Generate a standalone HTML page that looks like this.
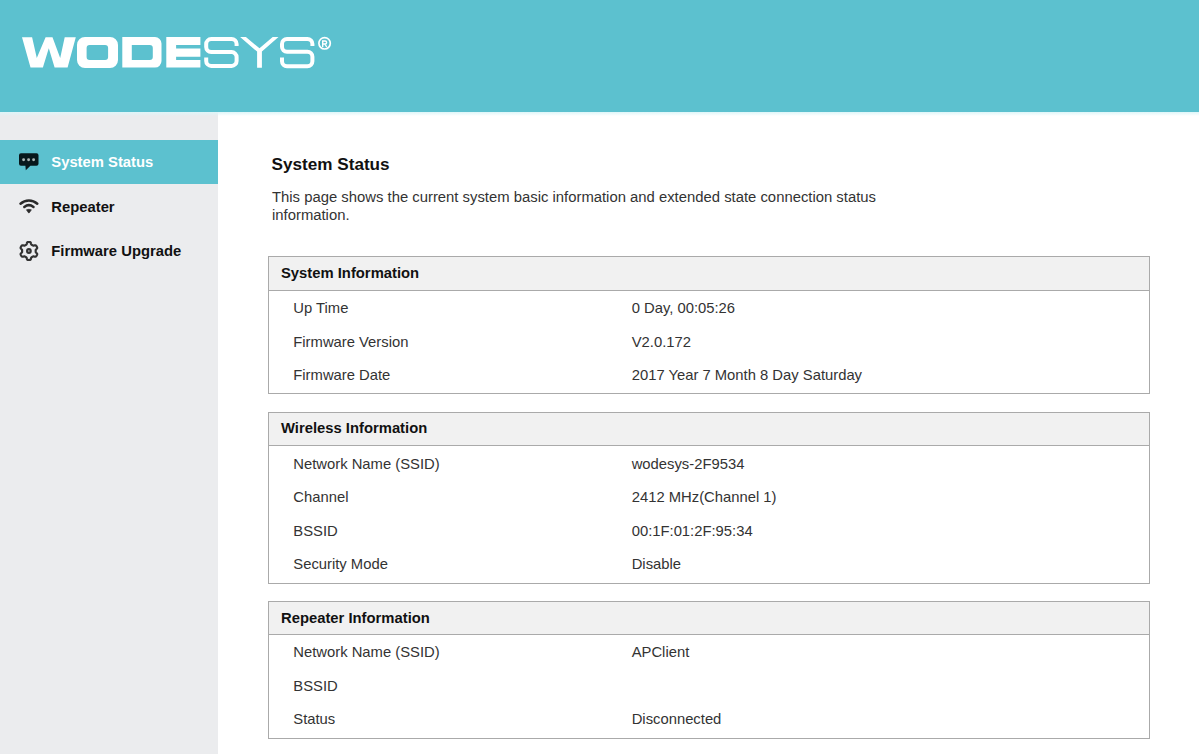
<!DOCTYPE html>
<html><head><meta charset="utf-8">
<style>
html,body{margin:0;padding:0;}
body{width:1199px;height:754px;overflow:hidden;position:relative;background:#fff;font-family:"Liberation Sans",sans-serif;}
#hdr{position:absolute;left:0;top:0;width:1199px;height:112px;background:#5cc1cf;}
#logo{position:absolute;left:0;top:0;}
#side{position:absolute;left:0;top:112px;width:218px;height:642px;background:#ebecee;}
.nav{position:absolute;left:0;width:218px;height:44px;font-size:14.8px;font-weight:bold;color:#111;}
.nav .t{position:absolute;left:51.3px;top:0;line-height:44px;white-space:nowrap;}
.nav svg{position:absolute;left:0;top:0;}
.nav.act{background:#5cc1cf;color:#fff;}
#title{position:absolute;left:271.5px;top:154.3px;font-size:17.15px;font-weight:bold;color:#111;line-height:20px;white-space:nowrap;}
#desc{position:absolute;left:272px;top:189.3px;width:640px;font-size:14.85px;color:#333;line-height:17.8px;}
.box{position:absolute;left:268px;width:882px;border:1px solid #aaa;box-sizing:border-box;}
.box .h{height:33px;border-bottom:1px solid #aaa;background:#f1f1f1;position:relative;}
.box .h span{position:absolute;left:12px;top:0;line-height:33px;font-size:14.8px;font-weight:bold;color:#111;white-space:nowrap;}
.row{position:absolute;left:0;width:100%;height:33.4px;font-size:14.8px;color:#333;}
.row span{position:absolute;top:0.8px;line-height:33.4px;white-space:nowrap;}
.row .l{left:24.3px;}
.row .v{left:362.7px;}
</style></head><body>
<div id="hdr">
<svg id="logo" width="360" height="112" viewBox="0 0 360 112">
<g fill="#fff">
<path d="M22 37.2H32.1L36.8 58L45.6 37.2H52.5L60.2 58L64.7 37.2H75.8L67.6 67.6H54.6L48.8 48.2L42.9 67.6H30.5Z"/>
<path fill-rule="evenodd" d="M85 37H110A8 8 0 0 1 118 45V60A8 8 0 0 1 110 68H85A8 8 0 0 1 77 60V45A8 8 0 0 1 85 37ZM89.6 45H105.1A3 3 0 0 1 108.1 48V57.1A3 3 0 0 1 105.1 60.1H89.6A3 3 0 0 1 86.6 57.1V48A3 3 0 0 1 89.6 45Z"/>
<path fill-rule="evenodd" d="M122.3 37.1H155A6.5 6.5 0 0 1 161.5 43.6V61.1A6.5 6.5 0 0 1 155 67.6H122.3ZM131.8 45.1V59.9H149.8A3 3 0 0 0 152.8 56.9V48.1A3 3 0 0 0 149.8 45.1Z"/>
<path d="M166.3 37.1H200.4V45.1H176.1V48.4H200.4V56.7H176.1V59.9H200.4V67.6H166.3Z"/>
<path d="M240.1 37.1H245.9L259.5 48.3L272.7 37.1H278.5L261.9 51.6V67.8H257.1V51.6Z"/>
</g>
<g fill="none" stroke="#fff" stroke-width="4">
<path d="M236.6 46V44A5 5 0 0 0 231.6 39.1H211.2A5 5 0 0 0 206.2 44.1V47.1A5 5 0 0 0 211.2 52.1H231.6A5 5 0 0 1 236.6 57.1V60.9A5 5 0 0 1 231.6 65.9H211.2A5 5 0 0 1 206.2 60.9V57.5"/>
<path d="M312.4 46V44A5 5 0 0 0 307.4 39H287A5 5 0 0 0 282 44V46.7A5 5 0 0 0 287 51.7H307.4A5 5 0 0 1 312.4 56.7V61.2A5 5 0 0 1 307.4 66.2H287A5 5 0 0 1 282 61.2V57.5"/>
</g>
<circle cx="324.6" cy="43.3" r="5.7" fill="none" stroke="#fff" stroke-width="1.7"/>
<path d="M322.7 47V41H325.1A1.5 1.5 0 0 1 325.1 44H322.7M324.9 44L326.7 47" fill="none" stroke="#fff" stroke-width="1.4"/>
</svg>
</div>
<div id="ring" style="position:absolute;left:0;top:112px;width:1199px;height:4px;background:linear-gradient(rgba(222,246,249,1),rgba(222,246,249,0));z-index:1"></div>
<div id="side">
<div class="nav act" style="top:28px">
<svg width="52" height="44" viewBox="0 140 52 44"><path d="M21 153.2H36.5A2 2 0 0 1 38.5 155.2V163.7A2 2 0 0 1 36.5 165.7H30.4L25.8 170.3L25.4 165.7H21A2 2 0 0 1 19 163.7V155.2A2 2 0 0 1 21 153.2Z" fill="#07181c"/><g fill="#aab6b4"><circle cx="23.6" cy="159.8" r="1.45"/><circle cx="28.6" cy="159.8" r="1.45"/><circle cx="33.6" cy="159.8" r="1.45"/></g></svg>
<span class="t">System Status</span></div>
<div class="nav" style="top:72.5px">
<svg width="52" height="44" viewBox="0 184.5 52 44"><g fill="none" stroke="#2a2a2a" stroke-width="2.5" stroke-linecap="round"><path d="M20.5 203.2A12.6 12.6 0 0 1 37.3 203.2"/><path d="M24.3 206.4A7.6 7.6 0 0 1 33.5 206.4"/></g><path d="M26.4 209.3Q28.9 208.3 31.4 209.3L29.4 212.2Q28.9 212.7 28.4 212.2Z" fill="#2a2a2a" stroke="#2a2a2a" stroke-width="0.6" stroke-linejoin="round"/></svg>
<span class="t">Repeater</span></div>
<div class="nav" style="top:117px">
<svg width="52" height="44" viewBox="0 229 52 44"><path d="M35.70 251.00 L35.70 250.82 L35.70 250.64 L35.70 250.47 L35.70 250.29 L35.71 250.10 L35.75 249.92 L35.82 249.72 L35.98 249.50 L36.22 249.24 L36.53 248.96 L36.83 248.65 L37.05 248.35 L37.16 248.08 L37.18 247.82 L37.15 247.58 L37.09 247.35 L37.01 247.13 L36.91 246.92 L36.81 246.71 L36.69 246.50 L36.57 246.30 L36.44 246.10 L36.30 245.91 L36.15 245.73 L35.99 245.56 L35.79 245.42 L35.56 245.31 L35.27 245.27 L34.90 245.30 L34.49 245.41 L34.08 245.54 L33.74 245.62 L33.47 245.65 L33.26 245.61 L33.08 245.55 L32.92 245.47 L32.76 245.38 L32.61 245.29 L32.45 245.20 L32.30 245.11 L32.15 245.02 L31.99 244.94 L31.83 244.85 L31.68 244.76 L31.53 244.65 L31.38 244.53 L31.25 244.36 L31.14 244.12 L31.04 243.78 L30.94 243.37 L30.83 242.96 L30.68 242.62 L30.50 242.39 L30.29 242.24 L30.07 242.15 L29.84 242.08 L29.60 242.04 L29.37 242.02 L29.14 242.00 L28.90 242.00 L28.66 242.00 L28.43 242.02 L28.20 242.04 L27.96 242.08 L27.73 242.15 L27.51 242.24 L27.30 242.39 L27.12 242.62 L26.97 242.96 L26.86 243.37 L26.76 243.78 L26.66 244.12 L26.55 244.36 L26.42 244.53 L26.27 244.65 L26.12 244.76 L25.97 244.85 L25.81 244.94 L25.65 245.02 L25.50 245.11 L25.35 245.20 L25.19 245.29 L25.04 245.38 L24.88 245.47 L24.72 245.55 L24.54 245.61 L24.33 245.65 L24.06 245.62 L23.72 245.54 L23.31 245.41 L22.90 245.30 L22.53 245.27 L22.24 245.31 L22.01 245.42 L21.81 245.56 L21.65 245.73 L21.50 245.91 L21.36 246.10 L21.23 246.30 L21.11 246.50 L20.99 246.71 L20.89 246.92 L20.79 247.13 L20.71 247.35 L20.65 247.58 L20.62 247.82 L20.64 248.08 L20.75 248.35 L20.97 248.65 L21.27 248.96 L21.58 249.24 L21.82 249.50 L21.98 249.72 L22.05 249.92 L22.09 250.10 L22.10 250.29 L22.10 250.47 L22.10 250.64 L22.10 250.82 L22.10 251.00 L22.10 251.18 L22.10 251.36 L22.10 251.53 L22.10 251.71 L22.09 251.90 L22.05 252.08 L21.98 252.28 L21.82 252.50 L21.58 252.76 L21.27 253.04 L20.97 253.35 L20.75 253.65 L20.64 253.92 L20.62 254.18 L20.65 254.42 L20.71 254.65 L20.79 254.87 L20.89 255.08 L20.99 255.29 L21.11 255.50 L21.23 255.70 L21.36 255.90 L21.50 256.09 L21.65 256.27 L21.81 256.44 L22.01 256.58 L22.24 256.69 L22.53 256.73 L22.90 256.70 L23.31 256.59 L23.72 256.46 L24.06 256.38 L24.33 256.35 L24.54 256.39 L24.72 256.45 L24.88 256.53 L25.04 256.62 L25.19 256.71 L25.35 256.80 L25.50 256.89 L25.65 256.98 L25.81 257.06 L25.97 257.15 L26.12 257.24 L26.27 257.35 L26.42 257.47 L26.55 257.64 L26.66 257.88 L26.76 258.22 L26.86 258.63 L26.97 259.04 L27.12 259.38 L27.30 259.61 L27.51 259.76 L27.73 259.85 L27.96 259.92 L28.20 259.96 L28.43 259.98 L28.66 260.00 L28.90 260.00 L29.14 260.00 L29.37 259.98 L29.60 259.96 L29.84 259.92 L30.07 259.85 L30.29 259.76 L30.50 259.61 L30.68 259.38 L30.83 259.04 L30.94 258.63 L31.04 258.22 L31.14 257.88 L31.25 257.64 L31.38 257.47 L31.53 257.35 L31.68 257.24 L31.83 257.15 L31.99 257.06 L32.15 256.98 L32.30 256.89 L32.45 256.80 L32.61 256.71 L32.76 256.62 L32.92 256.53 L33.08 256.45 L33.26 256.39 L33.47 256.35 L33.74 256.38 L34.08 256.46 L34.49 256.59 L34.90 256.70 L35.27 256.73 L35.56 256.69 L35.79 256.58 L35.99 256.44 L36.15 256.27 L36.30 256.09 L36.44 255.90 L36.57 255.70 L36.69 255.50 L36.81 255.29 L36.91 255.08 L37.01 254.87 L37.09 254.65 L37.15 254.42 L37.18 254.18 L37.16 253.92 L37.05 253.65 L36.83 253.35 L36.53 253.04 L36.22 252.76 L35.98 252.50 L35.82 252.28 L35.75 252.08 L35.71 251.90 L35.70 251.71 L35.70 251.53 L35.70 251.36 L35.70 251.18Z" fill="none" stroke="#333" stroke-width="2.2"/><circle cx="28.9" cy="251.0" r="1.8" fill="none" stroke="#333" stroke-width="2.2"/></svg>
<span class="t">Firmware Upgrade</span></div>
</div>
<div id="title">System Status</div>
<div id="desc">This page shows the current system basic information and extended state connection status information.</div>

<div class="box" style="top:256px;height:138px">
<div class="h" style="height:33px"><span style="top:-0.2px">System Information</span></div>
<div class="row" style="top:34.3px"><span class="l">Up Time</span><span class="v">0 Day, 00:05:26</span></div>
<div class="row" style="top:68.3px"><span class="l">Firmware Version</span><span class="v">V2.0.172</span></div>
<div class="row" style="top:101.5px"><span class="l">Firmware Date</span><span class="v">2017 Year 7 Month 8 Day Saturday</span></div>
</div>

<div class="box" style="top:412px;height:172px">
<div class="h" style="height:32px"><span style="top:-1px">Wireless Information</span></div>
<div class="row" style="top:34.3px"><span class="l">Network Name (SSID)</span><span class="v">wodesys-2F9534</span></div>
<div class="row" style="top:67.6px"><span class="l">Channel</span><span class="v">2412 MHz(Channel 1)</span></div>
<div class="row" style="top:101px"><span class="l">BSSID</span><span class="v">00:1F:01:2F:95:34</span></div>
<div class="row" style="top:134.4px"><span class="l">Security Mode</span><span class="v">Disable</span></div>
</div>

<div class="box" style="top:601px;height:138px">
<div class="h" style="height:32px"><span style="top:0.3px">Repeater Information</span></div>
<div class="row" style="top:33.7px"><span class="l">Network Name (SSID)</span><span class="v">APClient</span></div>
<div class="row" style="top:66.9px"><span class="l">BSSID</span><span class="v"></span></div>
<div class="row" style="top:100.4px"><span class="l">Status</span><span class="v">Disconnected</span></div>
</div>
</body></html>
